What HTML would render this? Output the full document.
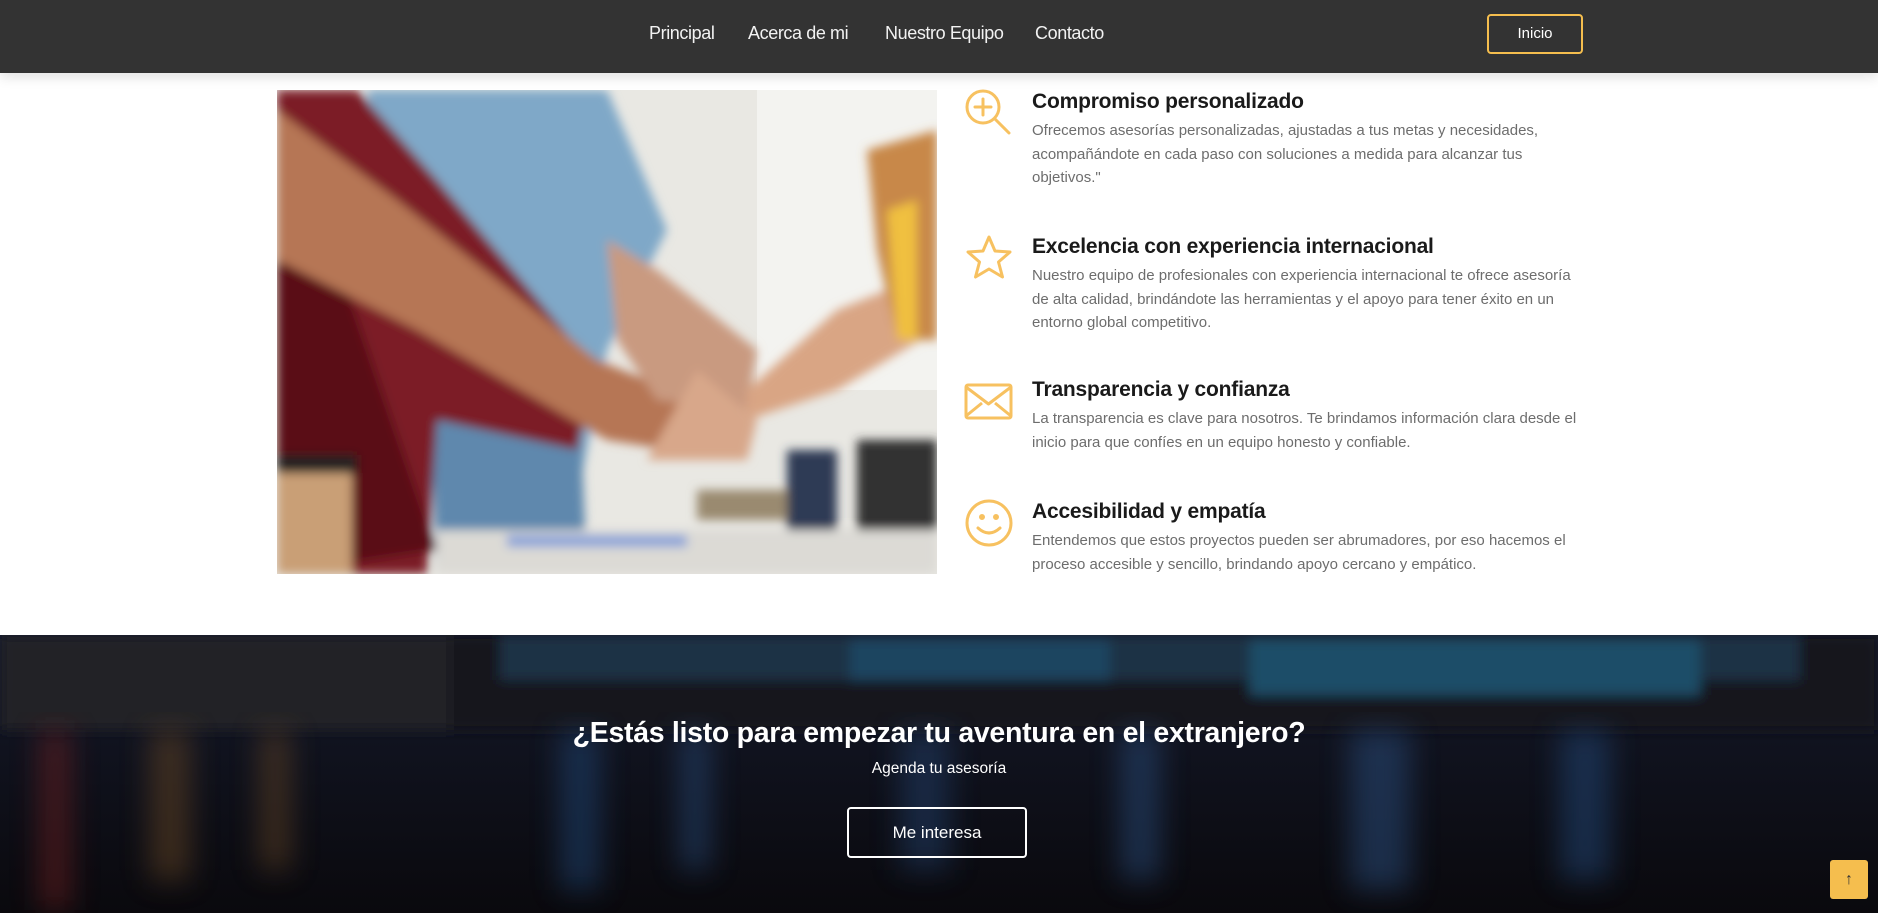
<!DOCTYPE html>
<html><head><meta charset="utf-8"><style>
*{margin:0;padding:0;box-sizing:border-box}
body{width:1878px;height:913px;overflow:hidden;background:#fff;font-family:"Liberation Sans",sans-serif;position:relative}
.nav{position:absolute;left:0;top:0;width:1878px;height:73px;background:#333;box-shadow:0 4px 12px rgba(0,0,0,.12)}
.nav a{position:absolute;top:23px;color:#f2f2f2;font-size:18px;text-decoration:none;letter-spacing:-.4px}
.btn{position:absolute;left:1487px;top:14px;width:96px;height:40px;border:2px solid #f5be4e;border-radius:4px;color:#fff;font-size:15px;text-align:center;line-height:36px}
.photo{position:absolute;left:277px;top:90px;width:660px;height:484px;overflow:hidden}
.item{position:absolute;left:964px;width:640px}
.item svg{position:absolute;left:0;top:0}
.item h3{position:absolute;left:68px;top:2px;font-size:21px;font-weight:bold;color:#1a1a1a;white-space:nowrap;letter-spacing:-.2px}
.item p{position:absolute;left:68px;top:31px;width:548px;font-size:15px;line-height:23.5px;color:#6d6d6d}
.dark{position:absolute;left:0;top:635px;width:1878px;height:278px;overflow:hidden;background:#0d0b10}
</style></head><body>
<div class="dark">
<svg width="1878" height="278" style="position:absolute;left:0;top:0">
<defs>
<linearGradient id="w" x1="0" y1="0" x2="0" y2="1"><stop offset="0" stop-color="#14192a"/><stop offset="1" stop-color="#0a090d"/></linearGradient>
<filter id="b"><feGaussianBlur stdDeviation="14"/></filter>
<filter id="b2"><feGaussianBlur stdDeviation="6"/></filter>
</defs>
<rect width="1878" height="278" fill="url(#w)"/>
<g filter="url(#b2)">
<rect x="0" y="0" width="1878" height="95" fill="#19171a"/>
<rect x="500" y="0" width="1300" height="45" fill="#1a3045"/>
<rect x="850" y="5" width="260" height="40" fill="#1f4560"/>
<rect x="1250" y="5" width="450" height="55" fill="#1f4e68"/>
<rect x="0" y="0" width="450" height="95" fill="#242226"/>
</g>
<g filter="url(#b)" opacity=".5">
<rect x="40" y="95" width="30" height="180" fill="#7a2020"/>
<rect x="150" y="95" width="40" height="150" fill="#6a4a25"/>
<rect x="260" y="95" width="30" height="140" fill="#6a4a25"/>
<rect x="560" y="95" width="40" height="160" fill="#234a7a"/>
<rect x="680" y="95" width="30" height="140" fill="#2a4f80"/>
<rect x="900" y="95" width="50" height="140" fill="#24406a"/>
<rect x="1120" y="95" width="40" height="150" fill="#2a4f80"/>
<rect x="1350" y="95" width="60" height="160" fill="#2a4f80"/>
<rect x="1560" y="95" width="50" height="150" fill="#234a7a"/>
</g>
</svg>
<div style="position:absolute;left:0;top:82px;width:1878px;text-align:center;color:#fff;font-size:28.5px;font-weight:bold;letter-spacing:-.3px">¿Estás listo para empezar tu aventura en el extranjero?</div>
<div style="position:absolute;left:0;top:125px;width:1878px;text-align:center;color:#fff;font-size:15.5px">Agenda tu asesoría</div>
<div style="position:absolute;left:847px;top:172px;width:180px;height:51px;border:2px solid #fff;border-radius:4px;color:#fff;font-size:17px;text-align:center;line-height:47px">Me interesa</div>
<div style="position:absolute;left:1830px;top:225px;width:38px;height:39px;background:#f5be4e;border-radius:3px;color:#333;font-size:16px;text-align:center;line-height:39px">↑</div>
</div>

<div class="nav">
<a style="left:649px">Principal</a>
<a style="left:748px">Acerca de mi</a>
<a style="left:885px">Nuestro Equipo</a>
<a style="left:1035px">Contacto</a>
<div class="btn">Inicio</div>
</div>

<div class="photo">
<svg width="660" height="484" viewBox="0 0 660 484">
<defs><filter id="s"><feGaussianBlur stdDeviation="5"/></filter></defs>
<rect width="660" height="484" fill="#e9e8e3"/>
<rect x="480" y="0" width="180" height="300" fill="#f3f3f0"/>
<g filter="url(#s)">
<polygon points="90,0 330,0 390,140 330,260 300,410 310,484 170,484 150,300 120,200" fill="#7fa8c8"/>
<polygon points="150,250 300,250 310,484 160,484" fill="#5e88ad"/>
<polygon points="0,0 80,0 160,90 320,280 300,360 160,330 150,484 0,484" fill="#7c1a25"/>
<polygon points="0,150 60,170 160,460 0,484" fill="#5a1018"/>
<polygon points="0,20 120,110 320,270 470,330 460,370 330,350 140,240 0,170" fill="#b67654"/>
<polygon points="330,150 380,180 480,260 470,320 380,310 340,250" fill="#c99a80"/>
<polygon points="660,180 660,240 560,300 470,330 470,300 560,220" fill="#d9a584"/>
<polygon points="590,60 660,40 660,250 620,250 600,160" fill="#c88848"/>
<polygon points="610,120 640,110 640,250 620,250" fill="#f0c040"/>
<rect x="510" y="360" width="50" height="100" fill="#2d3a55"/>
<rect x="580" y="350" width="80" height="90" fill="#333"/>
<rect x="420" y="400" width="90" height="30" fill="#9a8a70"/>
<rect x="160" y="440" width="500" height="44" fill="#dcdad5"/>
<rect x="230" y="445" width="180" height="12" fill="#8aa3d8"/>
<rect x="0" y="370" width="75" height="114" fill="#c99f76"/>
<rect x="0" y="365" width="80" height="18" fill="#222"/>
<polygon points="420,280 480,330 470,370 370,370" fill="#d8a78a"/>
</g>
</svg>
</div>

<div class="item" style="top:88px">
<svg width="50" height="50" viewBox="0 0 50 50" fill="none" stroke="#f7c160" stroke-width="3" stroke-linecap="round"><circle cx="19" cy="19" r="16"/><path d="M19 11v16M11 19h16M31 31l14 14"/></svg>
<h3>Compromiso personalizado</h3>
<p>Ofrecemos asesorías personalizadas, ajustadas a tus metas y necesidades, acompañándote en cada paso con soluciones a medida para alcanzar tus objetivos."</p>
</div>
<div class="item" style="top:233px">
<svg width="50" height="50" viewBox="0 0 50 50" fill="none" stroke="#f7c160" stroke-width="3" stroke-linejoin="round"><path d="M25 4l6 14 15 1-11.5 10 4 15L25 36 11.5 44l4-15L4 19l15-1z"/></svg>
<h3>Excelencia con experiencia internacional</h3>
<p>Nuestro equipo de profesionales con experiencia internacional te ofrece asesoría de alta calidad, brindándote las herramientas y el apoyo para tener éxito en un entorno global competitivo.</p>
</div>
<div class="item" style="top:376px">
<svg width="50" height="50" viewBox="0 0 50 50" fill="none" stroke="#f7c160" stroke-width="3" stroke-linejoin="round"><rect x="2" y="9" width="45" height="33" rx="2"/><path d="M2 11l22.5 17L47 11M2 40l16-13M47 40L31 27"/></svg>
<h3>Transparencia y confianza</h3>
<p>La transparencia es clave para nosotros. Te brindamos información clara desde el inicio para que confíes en un equipo honesto y confiable.</p>
</div>
<div class="item" style="top:498px">
<svg width="50" height="50" viewBox="0 0 50 50" fill="none" stroke="#f7c160" stroke-width="3" stroke-linecap="round"><circle cx="25" cy="25" r="22"/><path d="M14 30q11 10 22 0"/><circle cx="18" cy="19" r="1.5" fill="#f7c160"/><circle cx="32" cy="19" r="1.5" fill="#f7c160"/></svg>
<h3>Accesibilidad y empatía</h3>
<p>Entendemos que estos proyectos pueden ser abrumadores, por eso hacemos el proceso accesible y sencillo, brindando apoyo cercano y empático.</p>
</div>
</body></html>
